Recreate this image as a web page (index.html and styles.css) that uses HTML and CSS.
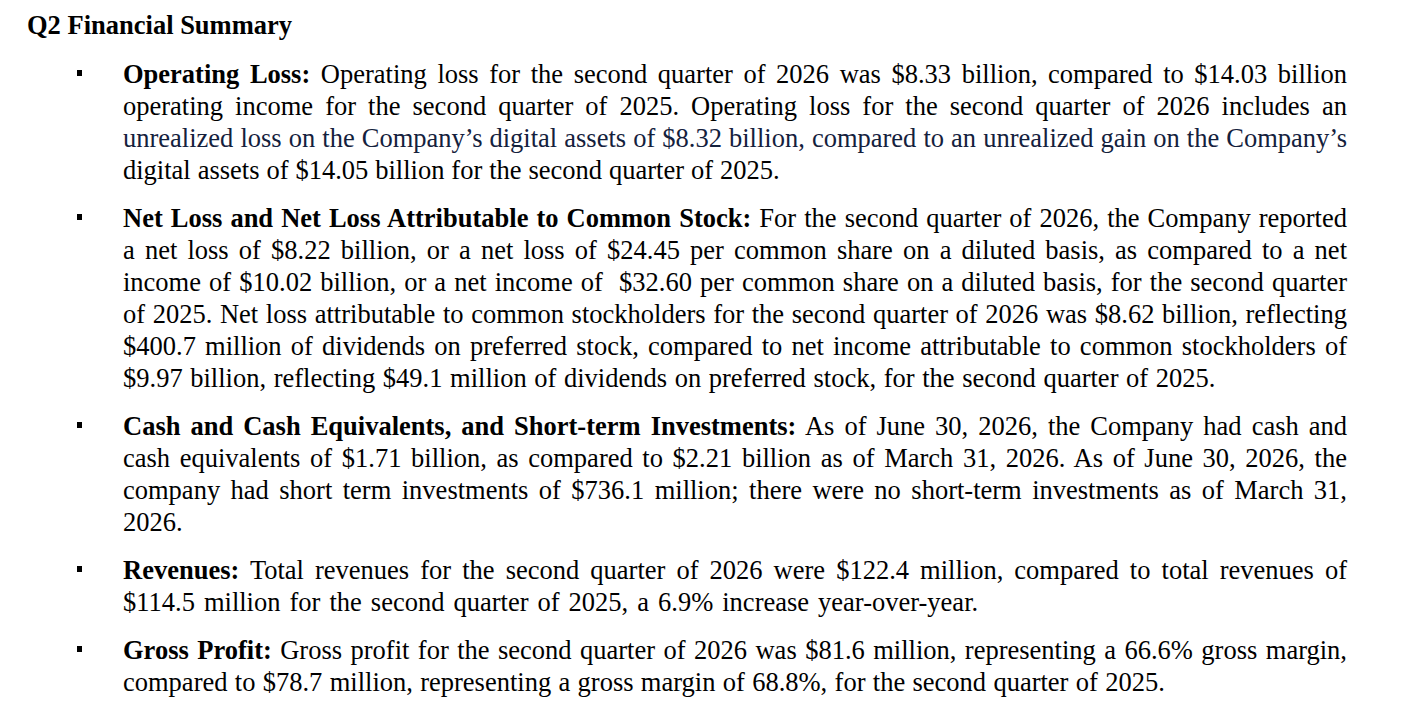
FILE: index.html
```html
<!DOCTYPE html>
<html lang="en">
<head>
<meta charset="utf-8">
<title>Q2 Financial Summary</title>
<link rel="stylesheet" href="styles.css">
</head>
<body>
<div class="page">
  <h1 class="title">Q2 Financial Summary</h1>
  <ul class="items">
    <li class="item">
      <span class="bullet"></span>
      <div class="para">
        <span class="ln"><b>Operating Loss:</b> Operating loss for the second quarter of 2026 was $8.33 billion, compared to $14.03 billion</span>
        <span class="ln">operating income for the second quarter of 2025. Operating loss for the second quarter of 2026 includes an</span>
        <span class="ln navy">unrealized loss on the Company’s digital assets of $8.32 billion, compared to an unrealized gain on the Company’s</span>
        <span class="ln last ws-s">digital assets of $14.05 billion for the second quarter of 2025.</span>
      </div>
    </li>
    <li class="item">
      <span class="bullet"></span>
      <div class="para">
        <span class="ln"><b>Net Loss and Net Loss Attributable to Common Stock:</b> For the second quarter of 2026, the Company reported</span>
        <span class="ln">a net loss of $8.22 billion, or a net loss of $24.45 per common share on a diluted basis, as compared to a net</span>
        <span class="ln">income of $10.02 billion, or a net income of &nbsp;$32.60 per common share on a diluted basis, for the second quarter</span>
        <span class="ln">of 2025. Net loss attributable to common stockholders for the second quarter of 2026 was $8.62 billion, reflecting</span>
        <span class="ln">$400.7 million of dividends on preferred stock, compared to net income attributable to common stockholders of</span>
        <span class="ln last ws-m">$9.97 billion, reflecting $49.1 million of dividends on preferred stock, for the second quarter of 2025.</span>
      </div>
    </li>
    <li class="item">
      <span class="bullet"></span>
      <div class="para">
        <span class="ln"><b>Cash and Cash Equivalents, and Short-term Investments:</b> As of June 30, 2026, the Company had cash and</span>
        <span class="ln">cash equivalents of $1.71 billion, as compared to $2.21 billion as of March 31, 2026. As of June 30, 2026, the</span>
        <span class="ln">company had short term investments of $736.1 million; there were no short-term investments as of March 31,</span>
        <span class="ln last">2026.</span>
      </div>
    </li>
    <li class="item">
      <span class="bullet"></span>
      <div class="para">
        <span class="ln"><b>Revenues:</b> Total revenues for the second quarter of 2026 were $122.4 million, compared to total revenues of</span>
        <span class="ln last ws-l">$114.5 million for the second quarter of 2025, a 6.9% increase year-over-year.</span>
      </div>
    </li>
    <li class="item">
      <span class="bullet"></span>
      <div class="para">
        <span class="ln"><b>Gross Profit:</b> Gross profit for the second quarter of 2026 was $81.6 million, representing a 66.6% gross margin,</span>
        <span class="ln last ws-s2">compared to $78.7 million, representing a gross margin of 68.8%, for the second quarter of 2025.</span>
      </div>
    </li>
  </ul>
</div>
</body>
</html>
```

FILE: styles.css
```css
html, body {
  margin: 0;
  padding: 0;
  background: #ffffff;
}

body {
  font-family: "Liberation Serif", "Times New Roman", serif;
  font-size: 26.5px;
  line-height: 32px;
  color: #000000;
}

.page {
  padding: 9px 81px 0 27px;
}

.title {
  margin: 0 0 17px 0;
  font-size: 26.5px;
  line-height: 32px;
  font-weight: bold;
}

.items {
  list-style: none;
  margin: 0;
  padding: 0;
}

.item {
  display: grid;
  grid-template-columns: 96px 1224px;
  margin-bottom: 16px;
}

.bullet {
  display: block;
  width: 5px;
  height: 6px;
  margin: 12px 0 0 50px;
  background: #000000;
}

.para {
  display: flex;
  flex-direction: column;
}

.ln {
  display: block;
  white-space: normal;
  text-align: justify;
  text-align-last: justify;
}

.ln.last {
  text-align-last: left;
}

.ws-s {
  word-spacing: 0.3px;
}

.ws-s2 {
  word-spacing: 0.7px;
}

.ws-m {
  word-spacing: 1px;
}

.ws-l {
  word-spacing: 2.4px;
}

.navy {
  color: #14213d;
}

b {
  font-weight: bold;
}
```
